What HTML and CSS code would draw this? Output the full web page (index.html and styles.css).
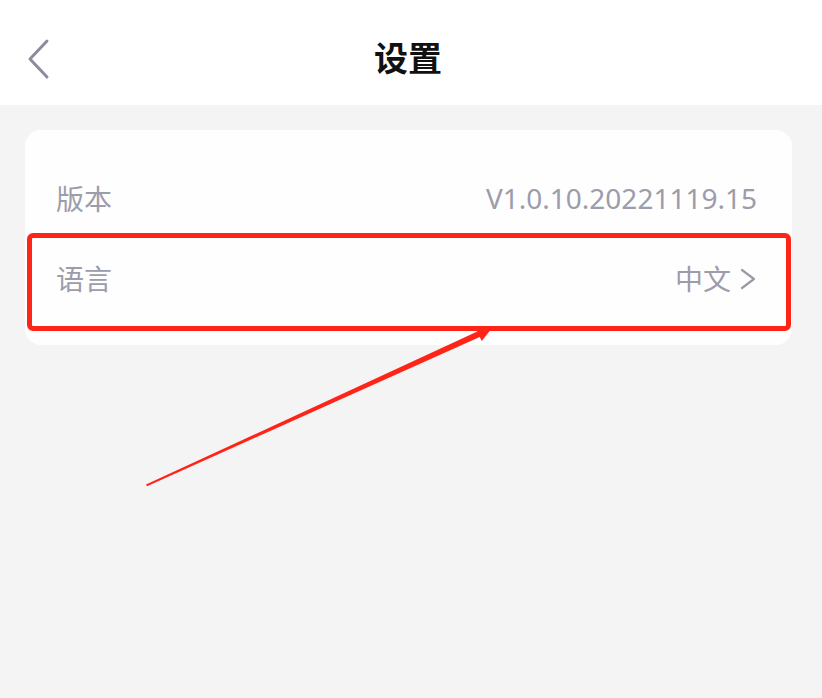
FILE: index.html
```html
<!DOCTYPE html>
<html>

<head>
    <meta charset="UTF-8">
    <title>设置</title>
    <link rel="stylesheet" href="styles.css">
</head>

<body>
    <header class="topbar">
        <div class="back">
            <svg width="26" height="42" viewBox="0 0 26 42">
                <path d="M22 3 L5 21 L22 39" fill="none" stroke="#8c8ca0" stroke-width="3" stroke-linecap="round" stroke-linejoin="round"/>
            </svg>
        </div>
        <h1 class="title">设置</h1>
        <div></div>
    </header>

    <main class="content">
        <section class="card">
            <div class="row">
                <span class="label">版本</span>
                <span class="value">V1.0.10.20221119.15</span>
            </div>
            <div class="row">
                <span class="label">语言</span>
                <span class="value">中文
                    <svg class="more" width="18" height="22" viewBox="0 0 18 22">
                        <path d="M3 2 L15 11 L3 20" fill="none" stroke="#9a9aaa" stroke-width="2.2" stroke-linecap="round" stroke-linejoin="round"/>
                    </svg>
                </span>
            </div>
        </section>
    </main>

    <!-- annotation: red box + arrow -->
    <div class="mark"></div>
    <svg class="arrow" width="822" height="698" viewBox="0 0 822 698">
        <polygon fill="#ff2418" points="146,484.5 477.3,331.6 475.2,327.6 492,328 481.8,341 479.7,337 147,486.2"/>
    </svg>
</body>

</html>
```

FILE: styles.css
```css
html,
body {
    margin: 0;
    height: 100%;
    background: #f4f4f4;
    font-family: "Noto Sans", "Noto Sans CJK SC", sans-serif;
}

/* barra do topo */
.topbar {
    height: 105px;
    background: #fff;
    display: grid;
    grid-template-columns: 1fr auto 1fr;
    align-items: center;
}

.back {
    padding-left: 25px;
    display: flex;
    align-items: center;
    margin-top: 12px;
}

.title {
    margin: 0;
    font-size: 34px;
    font-weight: bold;
    color: #111;
    font-family: "Noto Sans CJK SC", sans-serif;
    margin-left: -6px;
    margin-top: 8px;
}

/* lista */
.content {
    padding: 25px 30px 0 25px;
}

.card {
    background: #fefefe;
    border-radius: 16px;
    padding: 28px 35px 27px 31px;
}

.row {
    height: 80px;
    display: flex;
    align-items: center;
    justify-content: space-between;
    color: #9c9cab;
    font-size: 28px;
}

.label {
    font-family: "Noto Sans CJK SC", sans-serif;
}

.value {
    display: flex;
    align-items: center;
    gap: 8px;
    font-size: 28px;
}

.more {
    margin-top: 2px;
}

/* marcação vermelha por cima */
.mark {
    position: absolute;
    left: 27px;
    top: 233px;
    width: 754px;
    height: 88px;
    border: 5px solid #ff2418;
    border-radius: 6px;
}

.arrow {
    position: absolute;
    left: 0;
    top: 0;
    pointer-events: none;
}
```
